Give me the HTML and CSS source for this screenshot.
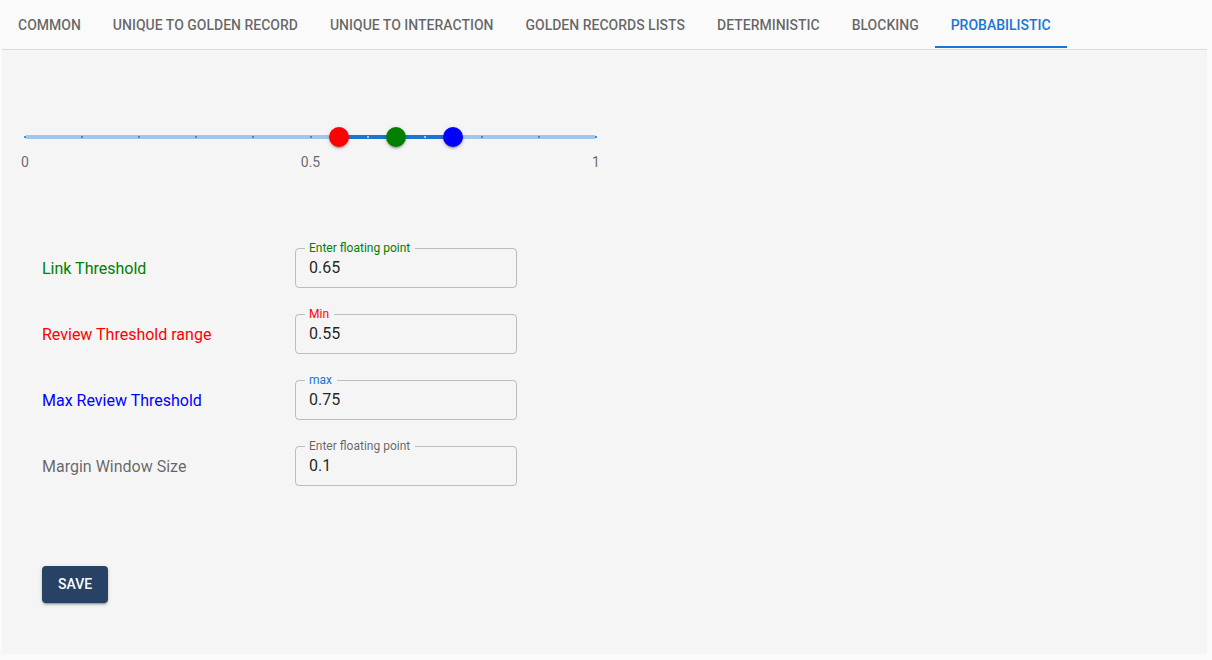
FILE: index.html
```html
<!DOCTYPE html>
<html lang="en">
<head>
<meta charset="utf-8">
<title>Probabilistic</title>
<link rel="stylesheet" href="styles.css">
</head>
<body>
<div class="page">
  <nav class="tabs">
    <div class="tab">Common</div>
    <div class="tab">Unique to Golden Record</div>
    <div class="tab">Unique to Interaction</div>
    <div class="tab">Golden Records Lists</div>
    <div class="tab">Deterministic</div>
    <div class="tab">Blocking</div>
    <div class="tab active">Probabilistic</div>
  </nav>
  <main class="panel">
    <div class="slider">
      <div class="rail"></div>
      <div class="track" style="left:55%;width:20%"></div>
      <span class="mark" style="left:0%"></span>
      <span class="mark" style="left:10%"></span>
      <span class="mark" style="left:20%"></span>
      <span class="mark" style="left:30%"></span>
      <span class="mark" style="left:40%"></span>
      <span class="mark" style="left:50%"></span>
      <span class="mark on" style="left:60%"></span>
      <span class="mark on" style="left:70%"></span>
      <span class="mark" style="left:80%"></span>
      <span class="mark" style="left:90%"></span>
      <span class="mark" style="left:100%"></span>
      <span class="thumb red" style="left:55%"></span>
      <span class="thumb green" style="left:65%"></span>
      <span class="thumb blue" style="left:75%"></span>
    </div>
    <div class="scale">
      <span class="tick" style="left:0%">0</span>
      <span class="tick" style="left:50%">0.5</span>
      <span class="tick" style="left:100%">1</span>
    </div>

    <div class="form">
      <div class="label c-green">Link Threshold</div>
      <fieldset class="field">
        <legend class="c-green">Enter floating point</legend>
        <div class="value">0.65</div>
      </fieldset>

      <div class="label c-red">Review Threshold range</div>
      <fieldset class="field">
        <legend class="c-red">Min</legend>
        <div class="value">0.55</div>
      </fieldset>

      <div class="label c-blue">Max Review Threshold</div>
      <fieldset class="field">
        <legend class="c-primary">max</legend>
        <div class="value">0.75</div>
      </fieldset>

      <div class="label c-grey">Margin Window Size</div>
      <fieldset class="field">
        <legend class="c-grey">Enter floating point</legend>
        <div class="value">0.1</div>
      </fieldset>
    </div>

    <button class="save" type="button">Save</button>
  </main>
</div>
</body>
</html>
```

FILE: styles.css
```css
* { box-sizing: border-box; }

html, body {
  margin: 0;
  padding: 0;
  background: #fafafa;
  font-family: Roboto, "Liberation Sans", Arial, sans-serif;
}

.page {
  margin: 0 5px 0 2px;
}

.tabs {
  display: flex;
  height: 49px;
  padding-bottom: 1px;
}

.tab {
  height: 48px;
  min-width: 90px;
  padding: 2px 16px 0;
  line-height: 46px;
  font-size: 14px;
  font-weight: 500;
  text-transform: uppercase;
  color: rgba(0, 0, 0, 0.6);
  text-align: center;
  white-space: nowrap;
}

.tab.active {
  color: #1976d2;
  box-shadow: inset 0 -2px 0 #1976d2;
}

.panel {
  height: 605px;
  background: #f5f5f5;
  border-top: 1px solid #dadada;
  padding-top: 77px;
}

.slider {
  position: relative;
  margin-left: 23px;
  width: 571px;
  height: 20px;
}

.rail {
  position: absolute;
  left: 0;
  right: 0;
  top: 8px;
  height: 4px;
  border-radius: 2px;
  background: #1976d2;
  opacity: 0.38;
}

.track {
  position: absolute;
  top: 8px;
  height: 4px;
  background: #1976d2;
}

.mark {
  position: absolute;
  top: 9px;
  width: 2px;
  height: 2px;
  margin-left: -1px;
  border-radius: 1px;
  background: #1976d2;
}

.mark.on {
  background: rgba(255, 255, 255, 0.8);
}

.thumb {
  position: absolute;
  top: 0;
  width: 20px;
  height: 20px;
  margin-left: -10px;
  border-radius: 50%;
  box-shadow: 0 3px 1px -2px rgba(0,0,0,0.2), 0 2px 2px 0 rgba(0,0,0,0.14), 0 1px 5px 0 rgba(0,0,0,0.12);
}

.thumb.red { background: #ff0000; }
.thumb.green { background: #008000; }
.thumb.blue { background: #0000ff; }

.scale {
  position: relative;
  margin: 5px 0 0 23px;
  width: 571px;
  height: 20px;
}

.tick {
  position: absolute;
  top: 0;
  transform: translateX(-50%);
  font-size: 14px;
  line-height: 20px;
  color: rgba(0, 0, 0, 0.6);
  white-space: nowrap;
}

.form {
  display: grid;
  grid-template-columns: 253px 222px;
  row-gap: 19px;
  align-items: end;
  margin: 69px 0 0 40px;
}

.label {
  height: 40px;
  display: flex;
  align-items: center;
  font-size: 16px;
}

.c-green { color: #008000; }
.c-red { color: #ff0000; }
.c-blue { color: #0000ff; }
.c-primary { color: #1976d2; }
.c-grey { color: rgba(0, 0, 0, 0.6); }

.field {
  margin: 0;
  min-width: 0;
  padding: 0 0 0 9px;
  border: 1px solid rgba(0, 0, 0, 0.23);
  border-radius: 4px;
}

.field legend {
  padding: 0 5px 0 4px;
  font-size: 12px;
  line-height: 14px;
}

.value {
  height: 32px;
  padding: 3px 0 0 4px;
  font-size: 16px;
  line-height: 20px;
  color: rgba(0, 0, 0, 0.87);
}

.save {
  display: block;
  margin: 80px 0 0 40px;
  min-width: 64px;
  padding: 6px 16px;
  border: 0;
  border-radius: 4px;
  background: #274264;
  color: #fff;
  font-family: Roboto, "Liberation Sans", Arial, sans-serif;
  font-size: 14px;
  font-weight: 500;
  line-height: 24.5px;
  text-transform: uppercase;
  box-shadow: 0 3px 1px -2px rgba(0,0,0,0.2), 0 2px 2px 0 rgba(0,0,0,0.14), 0 1px 5px 0 rgba(0,0,0,0.12);
}
```
